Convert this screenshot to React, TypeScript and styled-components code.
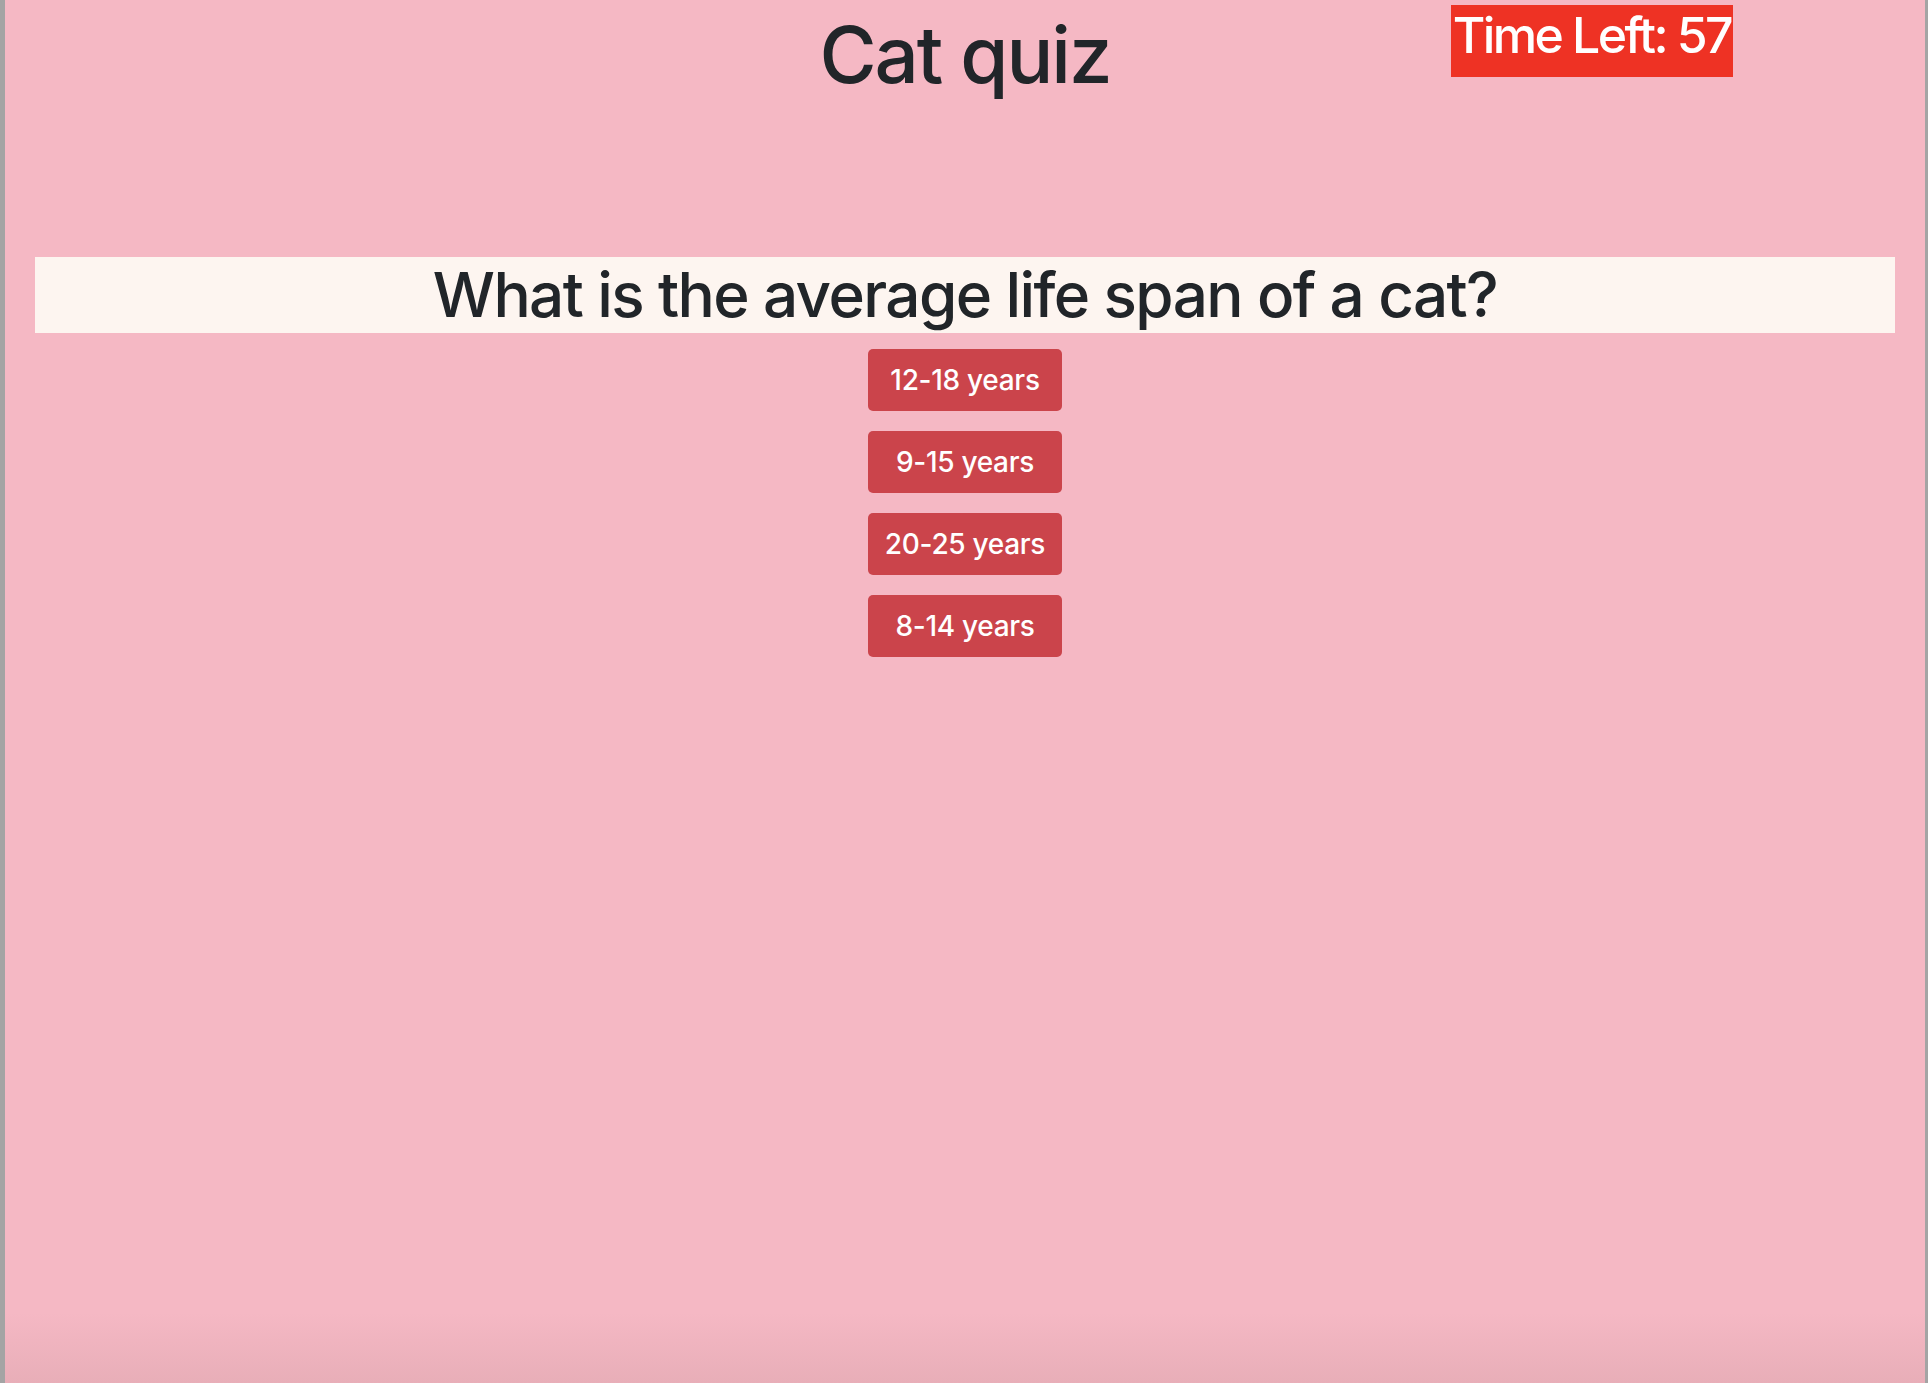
import React from "react";
import styled, { createGlobalStyle } from "styled-components";

const GlobalStyle = createGlobalStyle`
  html, body {
    margin: 0;
    padding: 0;
    background: #f5b8c4;
  }
  body {
    font-family: Inter, "Noto Sans", "Liberation Sans", sans-serif;
    color: #212529;
  }
`;

const Window = styled.div`
  box-sizing: border-box;
  min-height: 100vh;
  display: flex;
  flex-direction: column;
  border-left: 5px solid #a4a4a4;
  border-right: 3px solid #a4a4a4;
  background: linear-gradient(
    to bottom,
    #f5b8c4 0,
    #f5b8c4 calc(100% - 70px),
    #e8aeb8 100%
  );
`;

const Header = styled.header`
  position: relative;
  display: flex;
  justify-content: center;
  height: 257px;
`;

const Title = styled.h1`
  margin: 0;
  padding-top: 8px;
  font-size: 78px;
  line-height: 1.2;
  font-weight: 500;
  letter-spacing: -2px;
`;

const Timer = styled.div`
  position: absolute;
  top: 5px;
  right: 192px;
  height: 72px;
  box-sizing: border-box;
  padding: 0 2px;
  background: #ee3224;
  color: #ffffff;
  font-size: 50px;
  line-height: 60px;
  font-weight: 500;
  letter-spacing: -2.6px;
`;

const Question = styled.h2`
  margin: 0 30px;
  height: 76px;
  background: #fdf5f0;
  text-align: center;
  font-size: 62px;
  line-height: 76px;
  font-weight: 500;
  letter-spacing: -1.6px;
`;

const Answers = styled.div`
  display: flex;
  flex-direction: column;
  align-items: center;
  gap: 20px;
  padding-top: 16px;
`;

const AnswerButton = styled.button`
  width: 194px;
  height: 62px;
  border: none;
  border-radius: 5px;
  background: #cb444b;
  color: #ffffff;
  font-family: Inter, "Noto Sans", sans-serif;
  font-size: 28px;
  font-weight: 500;
  letter-spacing: -0.3px;
  cursor: pointer;
  padding: 0;
`;

const answers = ["12-18 years", "9-15 years", "20-25 years", "8-14 years"];

export default function App() {
  return (
    <>
      <GlobalStyle />
      <Window>
        <Header>
          <Title>Cat quiz</Title>
          <Timer>Time Left: 57</Timer>
        </Header>
        <Question>What is the average life span of a cat?</Question>
        <Answers>
          {answers.map((a) => (
            <AnswerButton key={a}>{a}</AnswerButton>
          ))}
        </Answers>
      </Window>
    </>
  );
}
